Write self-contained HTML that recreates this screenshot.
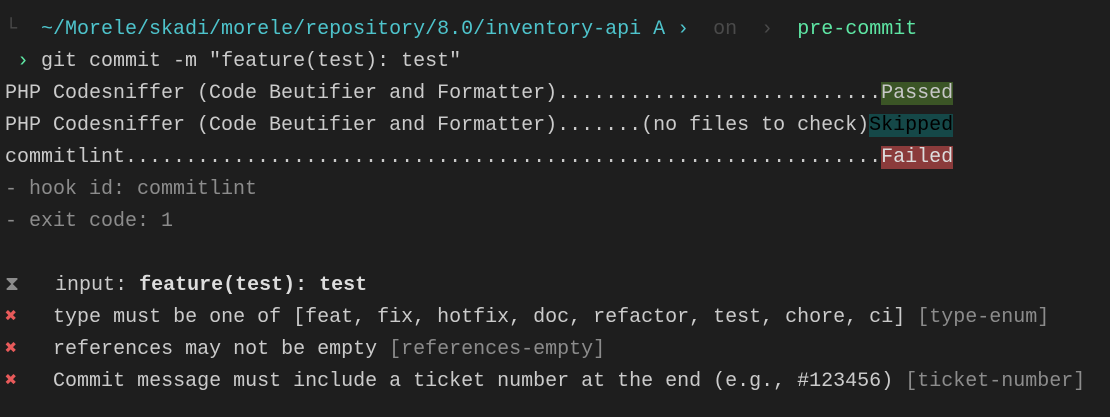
<!DOCTYPE html>
<html><head><meta charset="utf-8"><style>
html,body{margin:0;background:#1e1e1e;width:1110px;height:417px;overflow:hidden}
.t{position:absolute;left:5px;top:14px;font-family:"Liberation Mono","DejaVu Sans Mono",monospace;font-size:20px;line-height:32px;color:#cbcbcb;white-space:pre}
.c{color:#4ec4cc}.g{color:#5ee6a4}.d{color:#4a4a4a}.gr{color:#8c8c8c}
.p{background:#3b5526;color:#c8c8c8}.s{background:#154848;color:#000}.f{background:#8b3b3b;color:#ddd}
.r{color:#e85a5a;font-weight:bold}.b{font-weight:bold;color:#ddd}
</style></head><body><div class="t"><span class="d">└</span>  <span class="c">~/Morele/skadi/morele/repository/8.0/inventory-api A ›</span>  <span class="d">on  ›</span>  <span class="g">pre-commit</span>
 <span class="g">›</span> git commit -m "feature(test): test"
PHP Codesniffer (Code Beutifier and Formatter)...........................<span class="p">Passed</span>
PHP Codesniffer (Code Beutifier and Formatter).......(no files to check)<span class="s">Skipped</span>
commitlint...............................................................<span class="f">Failed</span>
<span class="gr">- hook id: commitlint</span>
<span class="gr">- exit code: 1</span>

<span class="gr">⧗</span>   input: <span class="b">feature(test): test</span>
<span class="r">✖</span>   type must be one of [feat, fix, hotfix, doc, refactor, test, chore, ci] <span class="gr">[type-enum]</span>
<span class="r">✖</span>   references may not be empty <span class="gr">[references-empty]</span>
<span class="r">✖</span>   Commit message must include a ticket number at the end (e.g., #123456) <span class="gr">[ticket-number]</span></div></body></html>
